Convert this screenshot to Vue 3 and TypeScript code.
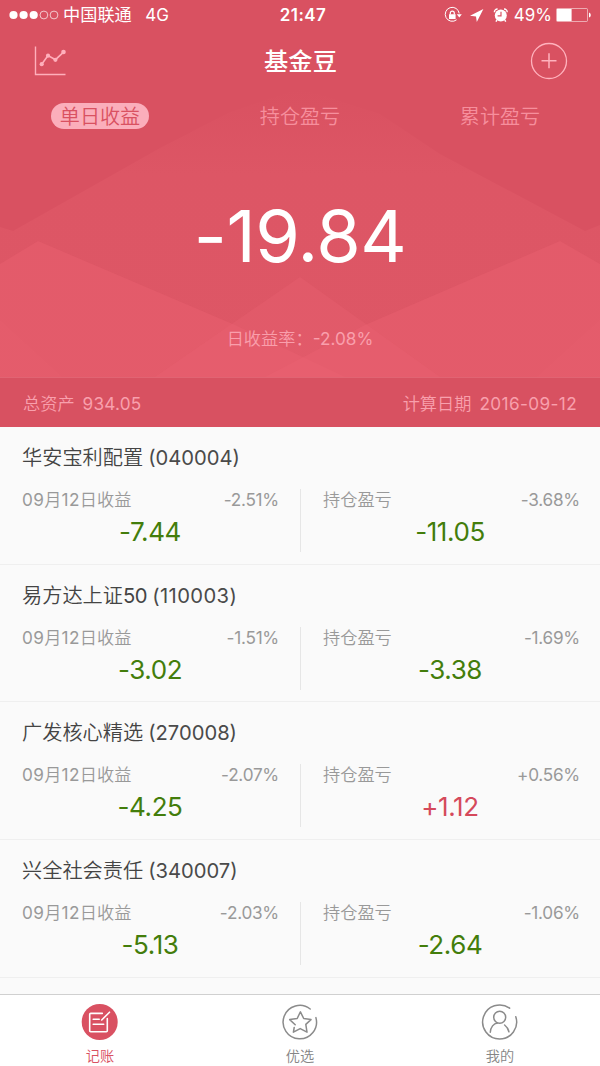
<script setup lang="ts">
interface Fund {
  name: string
  index?: string
  code: string
  dayRate: string
  day: string
  holdRate: string
  hold: string
}

const modes: string[] = ['单日收益', '持仓盈亏', '累计盈亏']

const funds: Fund[] = [
  { name: '华安宝利配置', code: '040004', dayRate: '-2.51%', day: '-7.44', holdRate: '-3.68%', hold: '-11.05' },
  { name: '易方达上证', index: '50', code: '110003', dayRate: '-1.51%', day: '-3.02', holdRate: '-1.69%', hold: '-3.38' },
  { name: '广发核心精选', code: '270008', dayRate: '-2.07%', day: '-4.25', holdRate: '+0.56%', hold: '+1.12' },
  { name: '兴全社会责任', code: '340007', dayRate: '-2.03%', day: '-5.13', holdRate: '-1.06%', hold: '-2.64' },
]

const isGain = (v: string): boolean => v.startsWith('+')
</script>

<template>
  <div class="screen">
    <header class="hero">
      <svg class="hills" viewBox="0 0 600 377" preserveAspectRatio="none">
        <defs>
          <linearGradient id="fade" x1="0" y1="0" x2="0" y2="1">
            <stop offset="0" stop-color="#e25c6a" stop-opacity="0" />
            <stop offset="0.3" stop-color="#e25c6a" stop-opacity="0.45" />
            <stop offset="1" stop-color="#e25c6a" stop-opacity="0.5" />
          </linearGradient>
        </defs>
        <polygon points="0,227 13,231 160,148 230,112 300,88 380,114 440,154 585,231 600,225 600,377 0,377" fill="url(#fade)" />
        <polygon points="0,264 38,241 235,325 345,377 0,377" fill="#e95f6f" opacity="0.5" />
        <polygon points="600,264 560,241 365,325 265,377 600,377" fill="#e95f6f" opacity="0.5" />
        <polygon points="300,277 155,377 440,377" fill="#ec6473" opacity="0.3" />
        <polygon points="0,320 62,377 0,377" fill="#ec6473" opacity="0.2" />
        <polygon points="600,320 537,377 600,377" fill="#ec6473" opacity="0.2" />
      </svg>

      <div class="status">
        <svg class="signal" width="50" height="10" viewBox="0 0 50 10">
          <g fill="#fff"><circle cx="4.5" cy="5" r="4.1" /><circle cx="14.6" cy="5" r="4.1" /><circle cx="24.7" cy="5" r="4.1" /></g>
          <g fill="none" stroke="#fff" stroke-width="0.8" opacity="0.85"><circle cx="34.9" cy="5" r="3.9" /><circle cx="45" cy="5" r="3.9" /></g>
        </svg>
        <span class="carrier">中国联通</span>
        <span class="net">4G</span>
        <span class="clock">21:47</span>
        <svg class="status-icons" width="66" height="18" viewBox="0 0 66 18">
          <g fill="none" stroke="#fff" stroke-width="1">
            <path d="M12.6 13.8A7 7 0 1 1 15.2 7.4" />
            <path d="M6.3 8.6V7.2a2 2 0 0 1 4 0v1.4" stroke-width="1.2" />
          </g>
          <path d="M5 8.3h6.6v4.8H5zM12.8 8.3h5l-2.5 3.2z" fill="#fff" />
          <path d="M39.4 3 32.8 16 32 10.4 26 9.8z" fill="#fff" />
          <circle cx="56.8" cy="9.6" r="6" fill="#fff" />
          <path d="M50.4 6.2a3 3 0 0 1 3.2-3.2M60 3a3 3 0 0 1 3.2 3.2M53 14l-1.1 1.7M60.7 14l1.1 1.7" fill="none" stroke="#fff" stroke-width="1.4" />
          <path d="M57 5.8v4h-3.4" fill="none" stroke="#d95262" stroke-width="1.2" />
        </svg>
        <span class="percent">49%</span>
        <svg class="battery" width="36" height="14" viewBox="0 0 36 14">
          <rect x="0.5" y="0.5" width="31" height="13" rx="1" fill="none" stroke="#fff" stroke-opacity="0.65" stroke-width="0.8" />
          <rect x="1" y="1" width="14.6" height="12" fill="#fff" />
          <path d="M33 4.5q1.8.5 1.8 2.5T33 9.5z" fill="#fff" />
        </svg>
      </div>

      <div class="nav">
        <svg class="trend" width="32" height="32" viewBox="0 0 32 32">
          <path d="M1.5 1.5v28h30" fill="none" stroke="#ffafbb" stroke-width="1.4" />
          <path d="M7.7 19.2 14 10.5 21.5 14.7 29.8 6.8" fill="none" stroke="#ffafbb" stroke-width="1.6" />
          <g fill="#ffafbb"><circle cx="7.7" cy="19.2" r="2.1" /><circle cx="14" cy="10.7" r="2.1" /><circle cx="21.4" cy="14.8" r="2.1" /><circle cx="29.5" cy="7" r="2.3" /></g>
        </svg>
        <h1 class="title">基金豆</h1>
        <svg class="add" width="38" height="38" viewBox="0 0 38 38" fill="none" stroke="#ffb2bd">
          <circle cx="19" cy="19" r="17.5" stroke-width="1.3" />
          <path d="M11.5 18.8h15M19 11.3v15" stroke-width="1.5" />
        </svg>
      </div>

      <div class="modes">
        <div v-for="(m, i) in modes" :key="m" class="mode">
          <span :class="['mode-label', { active: i === 0 }]">{{ m }}</span>
        </div>
      </div>

      <div class="total">-19.84</div>
      <div class="rate"><span>日收益率：</span><span class="rate-num">-2.08%</span></div>
    </header>

    <div class="summary">
      <div class="sum-item">总资产<span class="sum-num">934.05</span></div>
      <div class="sum-item">计算日期<span class="sum-num date">2016-09-12</span></div>
    </div>

    <main class="list">
      <section v-for="f in funds" :key="f.code" class="fund">
        <h2 class="fund-name">{{ f.name }}<span v-if="f.index" class="index">{{ f.index }}</span><span class="code">({{ f.code }})</span></h2>
        <div class="cols">
          <div class="col left">
            <div class="line">
              <span><span class="num">09</span>月<span class="num">12</span>日收益</span>
              <span class="pct">{{ f.dayRate }}</span>
            </div>
            <div :class="['value', { gain: isGain(f.day) }]">{{ f.day }}</div>
          </div>
          <div class="col right">
            <div class="line"><span>持仓盈亏</span><span class="pct">{{ f.holdRate }}</span></div>
            <div :class="['value', { gain: isGain(f.hold) }]">{{ f.hold }}</div>
          </div>
        </div>
      </section>
    </main>

    <nav class="tabs">
      <div class="tab current">
        <svg width="38" height="38" viewBox="0 0 38 38" fill="none">
          <circle cx="18.7" cy="19" r="18" fill="#d95162" />
          <g stroke="#fff" stroke-width="1.6" stroke-linecap="round" stroke-linejoin="round">
            <path d="M21.3 10.4H9.7a1 1 0 0 0-1 1v16.4a1 1 0 0 0 1 1h15.6a1 1 0 0 0 1-1V15.5" />
            <path d="M12.2 16.3h6M12.2 21.3h10.5M20.7 17l7.8-7.8" />
          </g>
        </svg>
        <span>记账</span>
      </div>
      <div class="tab">
        <svg width="38" height="38" viewBox="0 0 38 38" fill="none" stroke="#8b8b8b" stroke-width="1.5" stroke-linecap="round">
          <path d="M29.2 6A16.7 16.7 0 1 0 34.9 14.6" />
          <path d="M13.2 24.5 12.4 29.2 19.2 25.6 26 29.2 24.8 21.4 30 16.6 22.7 15.5 19.4 8.8 16.2 15.5 8.7 16.6 14.2 21.8" stroke-linejoin="round" />
        </svg>
        <span>优选</span>
      </div>
      <div class="tab">
        <svg width="38" height="38" viewBox="0 0 38 38" fill="none" stroke="#8b8b8b" stroke-width="1.5" stroke-linecap="round">
          <path d="M28.6 5.2A17 17 0 1 0 34.8 13.7" />
          <circle cx="18.7" cy="14.3" r="6" />
          <path d="M9.3 29.2c.3-4.9 3.3-8.8 7.2-9.2M23.6 22c2.2 1.6 3.6 4 4.3 6.8" />
        </svg>
        <span>我的</span>
      </div>
    </nav>
  </div>
</template>

<style>
body {
  background: #fafafa;
}
</style>

<style scoped>
.screen {
  width: 600px;
  height: 1066px;
  display: flex;
  flex-direction: column;
  overflow: hidden;
  background: #fafafa;
  font-family: Inter, "Noto Sans CJK SC", sans-serif;
  font-weight: 350;
  white-space: nowrap;
}
.hero {
  position: relative;
  height: 377px;
  flex: none;
  background: #d95161;
  color: #fff;
}
.hills {
  position: absolute;
  inset: 0;
  width: 100%;
  height: 100%;
}
.status {
  position: relative;
  height: 30px;
  display: flex;
  align-items: center;
  padding: 0 8px 0 9px;
  font-size: 17px;
  line-height: 24px;
  font-weight: 400;
}
.carrier {
  margin-left: 4px;
  font-size: 17.2px;
}
.net {
  margin-left: 13.5px;
}
.clock {
  position: absolute;
  left: 0;
  right: 0;
  text-align: center;
  padding-left: 6px;
  font-weight: 600;
  letter-spacing: 0.4px;
}
.status-icons {
  margin: 0 3.5px 0 auto;
}
.percent {
  letter-spacing: 0;
}
.battery {
  margin-left: 4px;
}
.nav {
  position: relative;
  height: 62px;
  display: flex;
  align-items: center;
  justify-content: space-between;
  padding: 0 32px 0 34px;
}
.title {
  margin: -4px 0 0;
  font-size: 24.3px;
  font-weight: 500;
  padding-left: 5px;
}
.modes {
  position: relative;
  margin-top: 2px;
  height: 46px;
  display: flex;
}
.mode {
  flex: 1;
  text-align: center;
  line-height: 48px;
}
.mode-label {
  display: inline-block;
  height: 26px;
  line-height: 28px;
  font-size: 20.1px;
  color: #f68f9d;
}
.mode-label.active {
  padding: 0 9px;
  border-radius: 13px;
  background: #fbaebb;
  color: #d95161;
}
.total {
  position: relative;
  margin-top: 48px;
  height: 96px;
  line-height: 96px;
  font-size: 72px;
  font-weight: 400;
  letter-spacing: -0.5px;
  text-align: center;
}
.rate {
  position: relative;
  margin-top: 43px;
  line-height: 24px;
  font-size: 17.2px;
  color: #f99fac;
  text-align: center;
}
.rate-num {
  font-weight: 400;
}
.summary {
  box-sizing: border-box;
  height: 50px;
  flex: none;
  display: flex;
  justify-content: space-between;
  align-items: center;
  padding: 0 23px;
  border-top: 1px solid #e16473;
  background: #d85161;
  color: #f8a0ad;
  font-size: 17.2px;
}
.sum-item {
  margin-top: -1px;
}
.sum-num {
  margin-left: 8px;
  font-weight: 400;
  letter-spacing: 0.2px;
}
.date {
  letter-spacing: 0.38px;
}
.list {
  flex: 1;
  min-height: 0;
  overflow: hidden;
}
.fund {
  box-sizing: border-box;
  height: 137.67px;
  padding-top: 15px;
  border-bottom: 1px solid #efefef;
}
.fund-name {
  margin: 0 0 0 22px;
  line-height: 32px;
  font-size: 20.2px;
  font-weight: 350;
  color: #444;
}
.index {
  font-weight: 400;
  letter-spacing: -0.4px;
}
.code {
  margin-left: 5px;
  font-weight: 400;
  color: #4a4a4a;
}
.index + .code {
  letter-spacing: 0.4px;
}
.cols {
  display: flex;
  margin-top: 15px;
  height: 63px;
}
.col {
  flex: 1;
  box-sizing: border-box;
}
.left {
  padding: 0 21px 0 22px;
  border-right: 1px solid #e6e6e6;
}
.right {
  padding: 0 20px 0 22px;
}
.line {
  display: flex;
  justify-content: space-between;
  line-height: 22px;
  font-size: 17.2px;
  color: #999;
}
.num {
  font-weight: 400;
  letter-spacing: 0.4px;
}
.pct {
  font-weight: 400;
  letter-spacing: -0.25px;
}
.value {
  margin-right: 1px;
  line-height: 41px;
  font-size: 26px;
  font-weight: 400;
  letter-spacing: -0.4px;
  color: #437d0b;
  text-align: center;
}
.right .value {
  margin-right: 3px;
}
.gain {
  color: #d5495b;
}
.tabs {
  box-sizing: border-box;
  height: 72px;
  flex: none;
  display: flex;
  border-top: 1px solid #d0d0d0;
  background: #fff;
}
.tab {
  flex: 1;
  display: flex;
  flex-direction: column;
  align-items: center;
  padding-top: 8px;
  font-size: 14.2px;
  line-height: 20px;
  color: #858585;
}
.tab span {
  margin-top: 5px;
}
.current {
  color: #d95162;
}
</style>
